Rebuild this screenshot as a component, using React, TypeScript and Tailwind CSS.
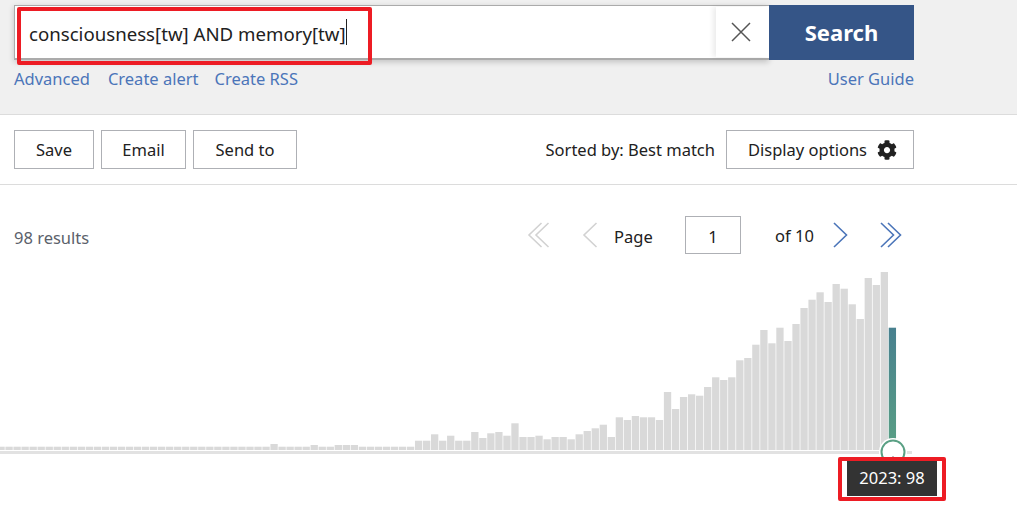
import { FaCog } from 'react-icons/fa'

const font = { fontFamily: '"Noto Sans", "Open Sans", sans-serif' }

// bar heights in px, one per year, oldest first (last one is the selected year)
const BARS = [
  ...Array(34).fill(3.3), 6, 3.3, 3.3, 3.3, 3.3, 5, 3.3, 3.3, 5, 5, 5, 3.3, 3.3, 3.3, 3.3, 3.3, 3.3, 3.3,
  9.3, 9.3, 15.7, 9.3, 14.3, 9.3, 9.3, 18, 12, 16.7, 18, 14.3, 26.7, 13, 13, 14.3, 10.7, 13, 13, 10.7, 15.7, 19, 21.7, 25.3, 13, 32.7, 30, 34,
  32.7, 32.7, 30, 58, 41, 53, 55.7, 54.3, 63, 72.7, 70, 72.7, 89.7, 92, 105.3, 120, 106.7, 122.3, 109, 126, 142, 150.3, 157.7, 148, 166, 161.3, 145.7, 131, 172, 165, 178, 122.3,
]

function Chevron({ dir, double, color }: { dir: 'l' | 'r'; double?: boolean; color: string }) {
  const w = double ? 23 : 16
  const pts = dir === 'l' ? ['14.5,1 2,13 14.5,25', '21.5,1 9,13 21.5,25'] : ['1,1 13.5,13 1,25', '8,1 20.5,13 8,25']
  return (
    <svg width={w} height={26} viewBox={`0 0 ${w} 26`} fill="none" stroke={color} strokeWidth="1.6">
      <polyline points={pts[0]} />
      {double && <polyline points={pts[1]} />}
    </svg>
  )
}

function OutlineButton({ label, width }: { label: string; width: string }) {
  return (
    <button className={`h-[39px] border border-[#aeb0b5] bg-white pt-[2px] text-[16.5px] text-[#212121] ${width}`}>{label}</button>
  )
}

export default function App() {
  return (
    <div className="relative h-[506px] w-[1017px] overflow-hidden bg-white text-[#212121]" style={font}>
      {/* Search header */}
      <div className="h-[115px] border-b border-[#dcdcdc] bg-[#f0f0f0] pl-[14px] pr-[103px] pt-[5px]">
        <div className="flex h-[55px]">
          <div className="flex flex-1 items-center border-b-2 border-l border-t border-[#ababab] bg-white pl-[14px] shadow-[0_2px_6px_rgba(0,0,0,0.2)]">
            <span className="whitespace-nowrap pt-[4px] text-[18.65px] leading-none">consciousness[tw] AND memory[tw]</span>
            <span className="h-[26px] w-px bg-[#222]" />
            <div className="ml-auto flex h-[50px] w-[53px] items-center justify-center bg-white shadow-[-3px_0_5px_rgba(0,0,0,0.08)]">
              <svg className="ml-[-4px] mt-[-1px]" width="20" height="20" viewBox="0 0 20 20" stroke="#555" strokeWidth="1.5">
                <path d="M1 1 19 19M19 1 1 19" />
              </svg>
            </div>
          </div>
          <button className="w-[145px] bg-[#355587] text-[22px] font-bold text-white">Search</button>
        </div>
        <div className="mt-[4px] flex text-[16.5px] leading-[30px] text-[#4b75b9]">
          <a>Advanced</a>
          <a className="ml-[18px]">Create alert</a>
          <a className="ml-[16px]">Create RSS</a>
          <a className="ml-auto">User Guide</a>
        </div>
      </div>

      {/* Actions */}
      <div className="flex h-[70px] items-center border-b border-[#dcdcdc] pl-[14px] pr-[103px]">
        <OutlineButton label="Save" width="w-[80px]" />
        <div className="ml-[7px]"><OutlineButton label="Email" width="w-[85px]" /></div>
        <div className="ml-[7px]"><OutlineButton label="Send to" width="w-[104px]" /></div>
        <span className="ml-auto pt-[2px] text-[16.5px]">Sorted by: Best match</span>
        <button className="ml-[11px] flex h-[39px] w-[188px] items-center gap-[10px] border border-[#aeb0b5] pl-[21px] text-[16.5px]">
          <span className="pt-[2px]">Display options</span>
          <FaCog className="text-[20px] text-[#212121]" />
        </button>
      </div>

      {/* Results and pagination */}
      <div className="mt-[31px] flex h-[38px] items-center pl-[14px]">
        <span className="w-[513px] pt-[7px] text-[16.5px] text-[#5b616b]">98 results</span>
        <Chevron dir="l" double color="#d2d2d2" />
        <div className="ml-[32px]"><Chevron dir="l" color="#d2d2d2" /></div>
        <span className="ml-[16px] w-[71px] pt-[5px] text-[16.5px]">Page</span>
        <div className="flex h-[38px] w-[56px] items-center justify-center border border-[#aeb0b5] pt-[4px] text-[16.5px]">1</div>
        <span className="ml-[34px] w-[58px] pt-[3px] text-[16.5px]">of 10</span>
        <Chevron dir="r" color="#4b75b9" />
        <div className="ml-[31px]"><Chevron dir="r" double color="#4b75b9" /></div>
      </div>

      {/* Timeline chart */}
      <svg className="mt-[10px] block" width="1017" height="200" viewBox="0 0 1017 200">
        <defs>
          <linearGradient id="selected" x1="0" y1="0" x2="0" y2="1">
            <stop offset="0" stopColor="#48808f" />
            <stop offset="1" stopColor="#5aa084" />
          </linearGradient>
        </defs>
        {BARS.map((h, i) => (
          <rect
            key={i}
            x={-2.6 + i * 8.03}
            y={186 - h}
            width={7.3}
            height={h}
            fill={i === BARS.length - 1 ? 'url(#selected)' : '#d9d9d9'}
          />
        ))}
        <rect x="0" y="187" width="912" height="3" fill="#e2e2e2" />
        <circle cx="893" cy="188" r="14" fill="#fff" />
        <circle cx="893" cy="188" r="11.5" fill="#fff" stroke="#5aa084" strokeWidth="2" />
      </svg>

      {/* Year tooltip */}
      <div className="absolute left-[847px] top-[461px] flex h-[35px] w-[90px] items-center justify-center bg-[#333] text-[16.5px] text-white">
        <span className="absolute left-[43px] top-[-5px] h-0 w-0 border-x-[3px] border-b-[5px] border-x-transparent border-b-[#333]" />
        2023: 98
      </div>

      {/* Red annotation boxes */}
      <div className="absolute left-[17px] top-[7px] h-[58px] w-[355px] rounded-[2px] border-[4px] border-[#ed1c24]" />
      <div className="absolute left-[838px] top-[457px] h-[44px] w-[108px] rounded-[2px] border-[4px] border-[#ed1c24]" />
    </div>
  )
}
